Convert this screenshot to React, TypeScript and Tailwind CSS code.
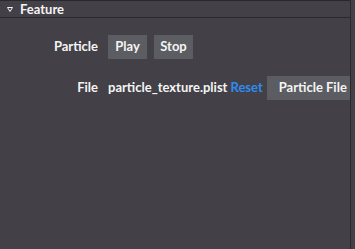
import React from 'react';

const font = { fontFamily: 'Lato, "Open Sans", sans-serif' };

const Button: React.FC<{ label: string; className?: string }> = ({ label, className }) => (
  <button
    className={`h-[24px] bg-[#5c5d62] text-[#f4f4f4] text-[13px] font-bold flex items-center justify-center shrink-0 whitespace-nowrap ${className ?? ''}`}
  >
    {label}
  </button>
);

const App: React.FC = () => {
  return (
    <div className="w-[355px] h-[249px] bg-[#434147] flex overflow-hidden" style={font}>
      <div className="w-[351px] h-full border-r border-[#29282c] flex flex-col shrink-0 overflow-hidden">
        <div className="h-[18px] border-t border-b border-[#29282c] flex items-center pl-[7px]">
          <svg width="6" height="5" viewBox="0 0 6 5" className="mt-[1px]">
            <path d="M0.5 0.5 H5.5 L3 4.5 Z" fill="#434147" stroke="#f2f2f2" strokeWidth="1" />
          </svg>
          <span className="ml-[7px] text-[13px] font-bold text-[#f4f4f4] leading-none">Feature</span>
        </div>

        <div className="flex items-center mt-[17px]">
          <div className="w-[98px] text-right text-[13px] font-bold text-[#f4f4f4]">Particle</div>
          <div className="ml-[10px] flex gap-[7px]">
            <Button label="Play" className="w-[39px]" />
            <Button label="Stop" className="w-[39px]" />
          </div>
        </div>

        <div className="flex items-center mt-[17px]">
          <div className="w-[98px] shrink-0 text-right text-[13px] font-bold text-[#f4f4f4]">File</div>
          <div className="ml-[10px] flex items-center shrink-0">
            <span className="text-[13px] font-bold text-[#f4f4f4] whitespace-nowrap">particle_texture.plist</span>
            <span className="ml-[3px] text-[13px] font-bold text-[#2d8cf0]">Reset</span>
            <Button label="Particle File" className="ml-[4px] px-[12px]" />
          </div>
        </div>
      </div>
    </div>
  );
};

export default App;
